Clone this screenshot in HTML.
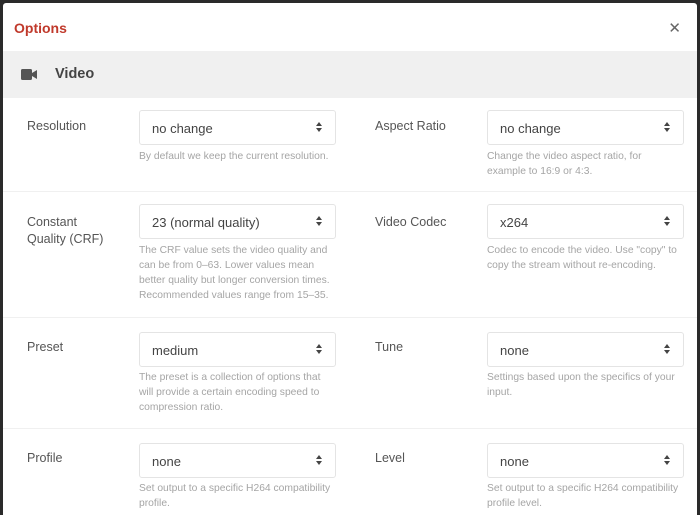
<!DOCTYPE html>
<html><head><style>
*{box-sizing:border-box;margin:0;padding:0}
html,body{width:700px;height:515px;overflow:hidden}
body{background:#2a2a2a;font-family:"Liberation Sans",sans-serif;position:relative}
.modal{position:absolute;left:3px;top:3px;width:694px;height:512px;background:#fff;border-radius:3px 3px 0 0;overflow:hidden}
.title{position:absolute;left:11px;top:17px;color:#c0392b;font-weight:bold;font-size:14px}
.close{position:absolute;right:16px;top:16px;font-size:15px;color:#666}
.sec{position:absolute;left:0;top:48px;width:694px;height:46px;background:#f0f0f0}
.sec span{position:absolute;left:52px;top:15px;font-weight:bold;font-size:14.5px;color:#444}
.row{position:absolute;left:0;width:694px;border-top:1px solid #f0f0f0}
.lbl{position:absolute;font-size:12.5px;color:#555;line-height:17px}
.sel{position:absolute;width:197px;height:35px;border:1px solid #e4e4e4;border-radius:3px;font-size:13px;color:#444;padding:10px 0 0 12px}
.sel:after{content:"";position:absolute;right:13px;top:11px;border-left:3px solid transparent;border-right:3px solid transparent;border-bottom:4px solid #444}
.sel:before{content:"";position:absolute;right:13px;top:17px;border-left:3px solid transparent;border-right:3px solid transparent;border-top:4px solid #444}
.help{position:absolute;width:200px;font-size:10.3px;color:#a5a5a5;line-height:15px}
</style></head><body>
<div class="modal">
<div class="title">Options</div>
<div class="close">✕</div>
<div class="sec"><svg style="position:absolute;left:18px;top:18px" width="17" height="11" viewBox="0 0 17 11"><rect x="0" y="0" width="11" height="11" rx="1.5" fill="#555"/><path d="M11 4L16 1V10L11 7Z" fill="#555"/></svg><span>Video</span></div>

<div class="row" style="top:94px;height:94px"></div>
<div class="lbl" style="left:24px;top:115px">Resolution</div>
<div class="sel" style="left:136px;top:107px">no change</div>
<div class="help" style="left:136px;top:146px">By default we keep the current resolution.</div>
<div class="lbl" style="left:372px;top:115px">Aspect Ratio</div>
<div class="sel" style="left:484px;top:107px">no change</div>
<div class="help" style="left:484px;top:146px">Change the video aspect ratio, for<br>example to 16:9 or 4:3.</div>

<div class="row" style="top:188px;height:126px"></div>
<div class="lbl" style="left:24px;top:211px">Constant<br>Quality (CRF)</div>
<div class="sel" style="left:136px;top:201px">23 (normal quality)</div>
<div class="help" style="left:136px;top:240px">The CRF value sets the video quality and<br>can be from 0–63. Lower values mean<br>better quality but longer conversion times.<br>Recommended values range from 15–35.</div>
<div class="lbl" style="left:372px;top:211px">Video Codec</div>
<div class="sel" style="left:484px;top:201px">x264</div>
<div class="help" style="left:484px;top:240px">Codec to encode the video. Use "copy" to<br>copy the stream without re-encoding.</div>

<div class="row" style="top:314px;height:112px"></div>
<div class="lbl" style="left:24px;top:336px">Preset</div>
<div class="sel" style="left:136px;top:329px">medium</div>
<div class="help" style="left:136px;top:367px">The preset is a collection of options that<br>will provide a certain encoding speed to<br>compression ratio.</div>
<div class="lbl" style="left:372px;top:336px">Tune</div>
<div class="sel" style="left:484px;top:329px">none</div>
<div class="help" style="left:484px;top:367px">Settings based upon the specifics of your<br>input.</div>

<div class="row" style="top:425px;height:100px"></div>
<div class="lbl" style="left:24px;top:447px">Profile</div>
<div class="sel" style="left:136px;top:440px">none</div>
<div class="help" style="left:136px;top:478px">Set output to a specific H264 compatibility<br>profile.</div>
<div class="lbl" style="left:372px;top:447px">Level</div>
<div class="sel" style="left:484px;top:440px">none</div>
<div class="help" style="left:484px;top:478px">Set output to a specific H264 compatibility<br>profile level.</div>
</div>
</body></html>
